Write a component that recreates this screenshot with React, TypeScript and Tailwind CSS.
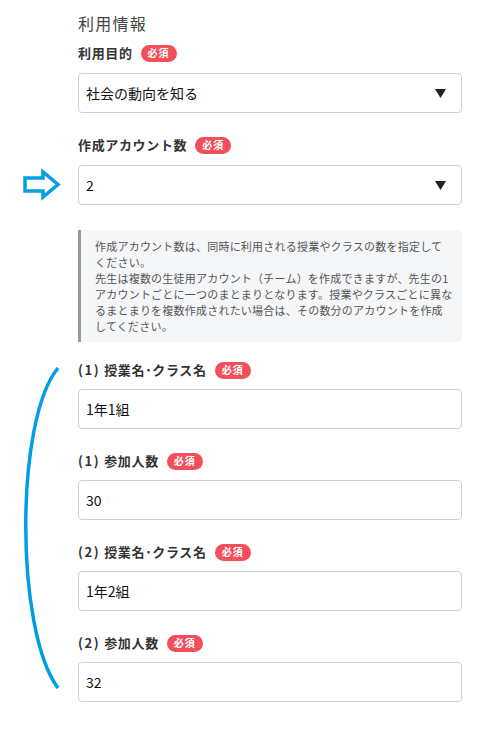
import React from "react";

const font = { fontFamily: '"Noto Sans CJK JP", "Noto Sans", sans-serif' };

function Badge() {
  return (
    <span className="ml-[8px] inline-flex h-[17px] items-center rounded-full bg-[#f24f5a] px-[7px] text-[10px] font-bold leading-none tracking-[0.1em] text-white">
      必須
    </span>
  );
}

function Label({ prefix, children }: { prefix?: string; children: React.ReactNode }) {
  return (
    <div className="flex h-[20px] items-center">
      {prefix && (
        <span className="mr-[4px] text-[13px] font-bold leading-[20px] tracking-[0.12em] text-[#333]">{prefix}</span>
      )}
      <span className="text-[13px] font-bold leading-[20px] tracking-[0.05em] text-[#333]">{children}</span>
      <Badge />
    </div>
  );
}

function Select({ value }: { value: string }) {
  return (
    <div className="mt-[10px] flex h-[40px] items-center justify-between rounded-[4px] border border-[#cfcfcf] bg-white pl-[7px] pr-[15px]">
      <span className="text-[14px] text-[#111]">{value}</span>
      <svg width="11" height="9" viewBox="0 0 11 9">
        <path d="M0 0 H11 L5.5 9 Z" fill="#222" />
      </svg>
    </div>
  );
}

function Input({ value }: { value: string }) {
  return (
    <div className="mt-[9px] flex h-[40px] items-center rounded-[4px] border border-[#cfcfcf] bg-white pl-[7px]">
      <span className="text-[14px] text-[#111]">{value}</span>
    </div>
  );
}

export default function App() {
  return (
    <div className="relative min-h-[730px] w-[495px] bg-white" style={font}>
      <svg className="absolute left-0 top-0" width="100" height="730" viewBox="0 0 100 730">
        <polygon
          points="25,178 43,178 43,172 58,184.5 43,197 43,191 25,191"
          fill="white"
          stroke="#009fe3"
          strokeWidth="3.5"
          strokeLinejoin="miter"
        />
        <path d="M58 368 C 15 420, 15 630, 58 688" fill="none" stroke="#009fe3" strokeWidth="3.5" />
      </svg>
      <div className="ml-[78px] mr-[33px] pt-[12px]">
        <div className="text-[16px] leading-[22px] tracking-[0.08em] text-[#444]">利用情報</div>
        <div className="mt-[9px]">
          <Label>利用目的</Label>
          <Select value="社会の動向を知る" />
        </div>
        <div className="mt-[22px]">
          <Label>作成アカウント数</Label>
          <Select value="2" />
        </div>
        <div className="mt-[25px] rounded-r-[4px] border-l-[3px] border-[#9a9a9a] bg-[#f5f6f8] py-2 pl-[14px] pr-2 text-[11px] leading-[16px] tracking-[0.02em] text-[#555]">
          作成アカウント数は、同時に利用される授業やクラスの数を指定して
          <br />
          ください。
          <br />
          先生は複数の生徒用アカウント（チーム）を作成できますが、先生の1
          <br />
          アカウントごとに一つのまとまりとなります。授業やクラスごとに異な
          <br />
          るまとまりを複数作成されたい場合は、その数分のアカウントを作成
          <br />
          してください。
        </div>
        <div className="mt-[18px]">
          <Label prefix="(1)">授業名･クラス名</Label>
          <Input value="1年1組" />
        </div>
        <div className="mt-[22px]">
          <Label prefix="(1)">参加人数</Label>
          <Input value="30" />
        </div>
        <div className="mt-[22px]">
          <Label prefix="(2)">授業名･クラス名</Label>
          <Input value="1年2組" />
        </div>
        <div className="mt-[22px]">
          <Label prefix="(2)">参加人数</Label>
          <Input value="32" />
        </div>
      </div>
    </div>
  );
}
